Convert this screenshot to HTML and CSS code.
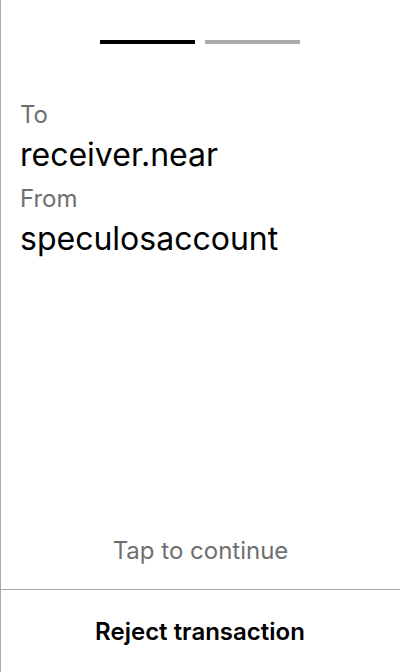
FILE: index.html
```html
<!DOCTYPE html>
<html>
<head>
<meta charset="utf-8">
<link rel="stylesheet" href="styles.css">
</head>
<body>
<div class="screen">
  <div class="progress">
    <span class="bar active"></span>
    <span class="bar"></span>
  </div>
  <div class="fields">
    <div class="label">To</div>
    <div class="value">receiver.near</div>
    <div class="label from">From</div>
    <div class="value">speculosaccount</div>
  </div>
  <div class="spacer"></div>
  <div class="tap">Tap to continue</div>
  <div class="footer">Reject transaction</div>
</div>
</body>
</html>
```
FILE: styles.css
```css
html, body {
  margin: 0;
  padding: 0;
  background: #fff;
}
.screen {
  width: 400px;
  height: 672px;
  box-sizing: border-box;
  border-left: 1px solid #aaaaaa;
  display: flex;
  flex-direction: column;
  font-family: Inter, "Noto Sans", sans-serif;
  color: #000;
}
.progress {
  display: flex;
  justify-content: center;
  gap: 10px;
  padding-top: 40px;
  margin-left: -1px;
}
.bar {
  display: block;
  width: 95px;
  height: 4px;
  background: #aaaaaa;
}
.bar.active {
  background: #000;
}
.fields {
  padding-left: 19px;
  margin-top: 55px;
}
.label {
  font-size: 24px;
  line-height: 32px;
  color: #6f6f6f;
}
.label.from {
  margin-top: 8px;
}
.value {
  font-size: 32px;
  line-height: 40px;
  margin-top: 4px;
}
.spacer {
  flex: 1;
}
.tap {
  text-align: center;
  font-size: 24px;
  line-height: 32px;
  color: #6f6f6f;
  margin-bottom: 22px;
}
.footer {
  border-top: 1px solid #aaaaaa;
  height: 83px;
  box-sizing: border-box;
  display: flex;
  align-items: center;
  justify-content: center;
  font-size: 24px;
  font-weight: 600;
  margin-left: -1px;
}
```
